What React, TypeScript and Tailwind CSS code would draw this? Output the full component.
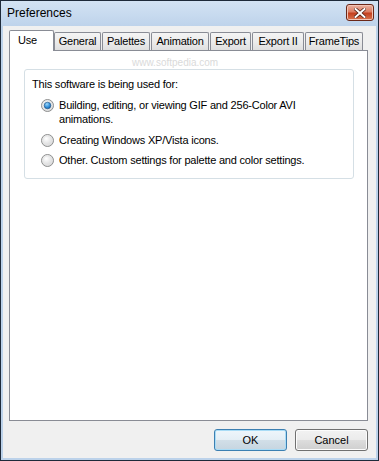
import React from 'react'

const tabs = [
  { label: 'General', cls: 'w-[47px]' },
  { label: 'Palettes', cls: 'w-[48px] ml-[1px]' },
  { label: 'Animation', cls: 'w-[58px] ml-[1px]' },
  { label: 'Export', cls: 'w-[41px] ml-[1px]' },
  { label: 'Export II', cls: 'w-[52px] ml-[1px]' },
  { label: 'FrameTips', cls: 'w-[58px] ml-[1px]' },
]

const options = [
  { checked: true, lines: ['Building, editing, or viewing GIF and 256-Color AVI', 'animations.'], cls: 'mt-[7px]' },
  { checked: false, lines: ['Creating Windows XP/Vista icons.'], cls: 'mt-[7px]' },
  { checked: false, lines: ['Other. Custom settings for palette and color settings.'], cls: 'mt-[6px]' },
]

function Radio({ checked }: { checked: boolean }) {
  return (
    <svg width="13" height="13" viewBox="0 0 13 13" className="shrink-0">
      <defs>
        <radialGradient id="rb" cx="0.4" cy="0.35" r="0.7">
          <stop offset="0" stopColor="#ffffff" />
          <stop offset="1" stopColor="#cfd0d1" />
        </radialGradient>
        <radialGradient id="dot" cx="0.4" cy="0.3" r="0.8">
          <stop offset="0" stopColor="#9cd8fb" />
          <stop offset="0.6" stopColor="#2d8ad6" />
          <stop offset="1" stopColor="#14599b" />
        </radialGradient>
      </defs>
      <circle cx="6.5" cy="6.5" r="6" fill="url(#rb)" stroke="#8e8f8f" strokeWidth="1" />
      <circle cx="6.5" cy="6.5" r="4.6" fill="none" stroke="#e4e4e4" strokeWidth="0.8" />
      {checked && <circle cx="6.5" cy="6.5" r="3.3" fill="url(#dot)" stroke="#1d4f80" strokeWidth="0.6" />}
    </svg>
  )
}

function Button({ label, primary }: { label: string; primary?: boolean }) {
  return (
    <div
      className={
        primary
          ? 'w-[73px] h-[22px] rounded-[3px] border border-[#3c7fb1] bg-[linear-gradient(to_bottom,#eef6fb_0%,#e4eef5_50%,#d2dfe8_50%,#c6d5e0_100%)] shadow-[inset_0_0_0_1px_#a9dcf6] flex items-center justify-center text-[11px] text-black'
          : 'w-[73px] h-[22px] rounded-[3px] border border-[#707070] bg-[linear-gradient(to_bottom,#f2f2f2_0%,#ebebeb_50%,#dddddd_50%,#cfcfcf_100%)] shadow-[inset_0_0_0_1px_#fcfcfc] flex items-center justify-center text-[11px] text-black'
      }
    >
      {label}
    </div>
  )
}

export default function App() {
  return (
    <div className="w-[379px] h-[461px] border border-[#1e2a3a] bg-[#bcd2ea] flex flex-col font-['Liberation_Sans',Arial,sans-serif] select-none">
      {/* title bar */}
      <div className="h-[25px] flex items-start justify-between pl-[6px] pr-[4px] bg-[linear-gradient(to_bottom,#d3e3f4,#bed3eb)]">
        <span className="mt-[5px] text-[12px] leading-[15px] text-black">Preferences</span>
        <div className="mt-[3px] w-[28px] h-[17px] rounded-[3px] border border-[#6b2718] bg-[linear-gradient(to_bottom,#eab3a3_0%,#dc7d63_45%,#c4401f_55%,#d8744f_100%)] shadow-[inset_0_0_0_1px_#f2c4b6] flex items-center justify-center">
          <svg width="12" height="10" viewBox="0 0 12 10">
            <path d="M1.5 1 L10.5 9 M10.5 1 L1.5 9" stroke="#4a1a10" strokeWidth="3.4" strokeLinecap="square" />
            <path d="M1.5 1 L10.5 9 M10.5 1 L1.5 9" stroke="#ffffff" strokeWidth="2" strokeLinecap="square" />
          </svg>
        </div>
      </div>

      {/* client */}
      <div className="flex-1 mx-[2px] mb-[2px] bg-[#f0f0f0] flex flex-col pt-[4px] pl-[6px] pr-[8px]">
        <div className="h-[21px] flex items-end text-[11px] tracking-[-0.2px] text-black">
          <div className="relative z-10 w-[45px] h-[21px] bg-white border-l border-t border-r border-[#898c95] rounded-t-[2px] pl-[8px] pt-[3px] leading-[13px]">
            Use
          </div>
          {tabs.map((t) => (
            <div
              key={t.label}
              className={`${t.cls} h-[18px] mb-px border-l border-t border-r border-[#898c95] rounded-t-[2px] bg-[linear-gradient(to_bottom,#f4f4f4_0%,#ececec_50%,#dfdfdf_100%)] flex items-center justify-center leading-[13px] whitespace-nowrap`}
            >
              {t.label}
            </div>
          ))}
        </div>

        <div className="-mt-px w-[359px] h-[371px] border border-[#898c95] bg-white flex flex-col">
          <div className="h-[18px] pl-[122px] pt-[7px] text-[10px] leading-[10px] text-[#dadada]">www.softpedia.com</div>
          <div className="ml-[14px] w-[330px] h-[110px] border border-[#d5dfe5] rounded-[3px] pt-[7px] pl-[7px] text-[11px] leading-[14px] tracking-[-0.2px] text-black">
            <div>This software is being used for:</div>
            {options.map((o, i) => (
              <div key={i} className={`${o.cls} flex items-start ml-[9px] gap-[5px]`}>
                <div className="h-[14px] flex items-center">
                  <Radio checked={o.checked} />
                </div>
                <div>
                  {o.lines.map((l) => (
                    <div key={l}>{l}</div>
                  ))}
                </div>
              </div>
            ))}
          </div>
        </div>

        <div className="mt-[8px] flex justify-end gap-[8px]">
          <Button label="OK" primary />
          <Button label="Cancel" />
        </div>
      </div>
    </div>
  )
}
